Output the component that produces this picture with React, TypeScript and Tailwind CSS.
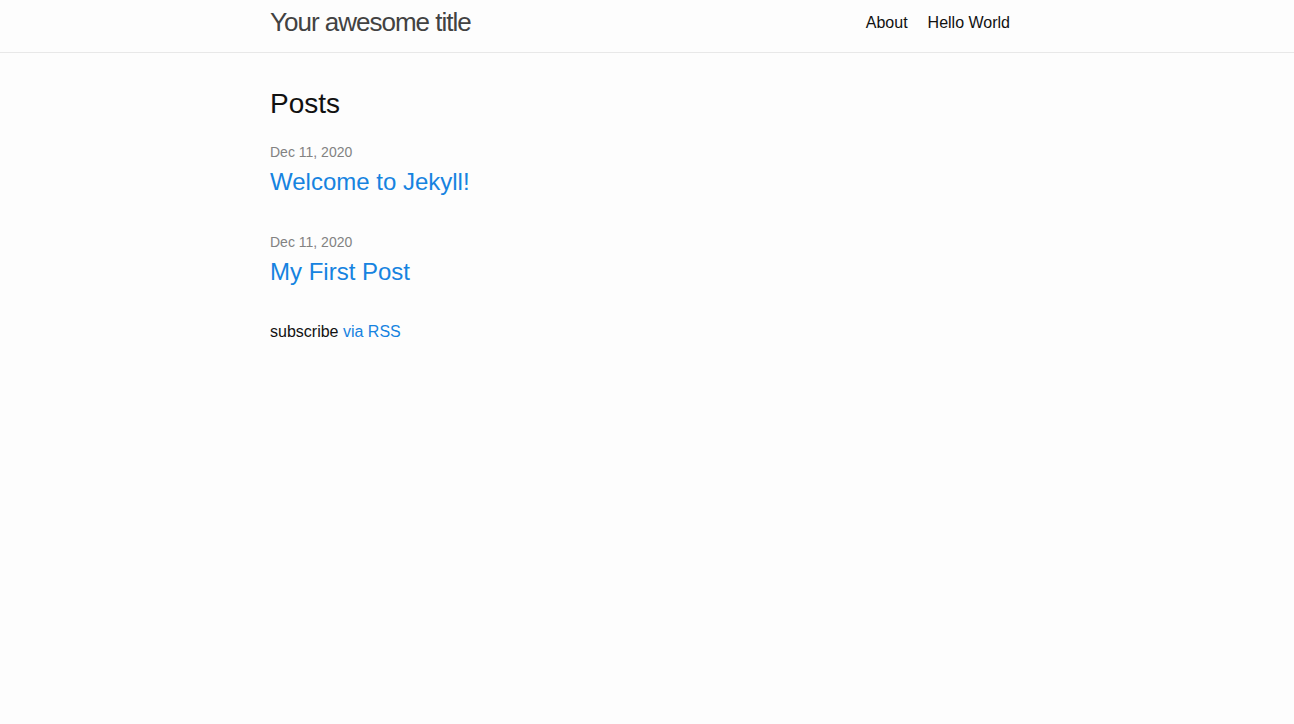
const posts = [
  { date: 'Dec 11, 2020', title: 'Welcome to Jekyll!' },
  { date: 'Dec 11, 2020', title: 'My First Post' },
];

function App() {
  return (
    <div className="min-h-screen bg-[#fdfdfd] text-[#111] font-['Liberation_Sans',Arial,sans-serif] text-base leading-normal">
      <header className="h-[53px] border-b border-[#e8e8e8]">
        <div className="ml-[270px] w-[740px] h-[45px] flex items-center justify-between">
          <a href="#" className="text-[26px] font-light tracking-[-1px] text-[#424242] leading-[45px]">
            Your awesome title
          </a>
          <nav className="flex gap-5 leading-[45px]">
            <a href="#" className="text-[#111]">About</a>
            <a href="#" className="text-[#111]">Hello World</a>
          </nav>
        </div>
      </header>

      <main className="ml-[270px] w-[740px] pt-[33px]">
        <h2 className="text-[28px] leading-[36px] mb-[18px]">Posts</h2>
        <ul>
          {posts.map((post, i) => (
            <li key={i} className="mb-[30px]">
              <div className="text-sm text-[#828282] leading-[24px]">{post.date}</div>
              <h3 className="text-[24px] leading-[36px]">
                <a href="#" className="text-[#1683e0]">{post.title}</a>
              </h3>
            </li>
          ))}
        </ul>
        <p>
          subscribe <a href="#" className="text-[#1683e0]">via RSS</a>
        </p>
      </main>
    </div>
  );
}

export default App;
